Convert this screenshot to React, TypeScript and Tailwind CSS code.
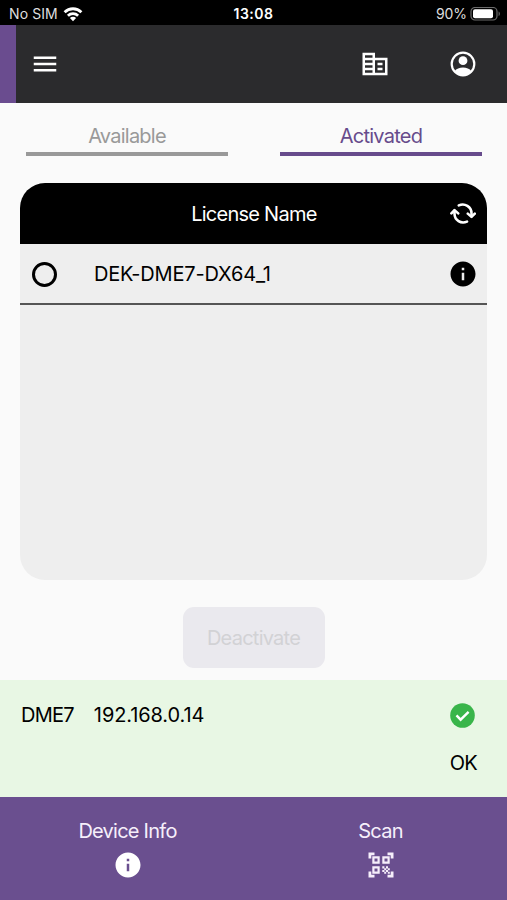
import { MdCorporateFare, MdInfo, MdMenu } from "react-icons/md"

type License = {
  id: string
  name: string
}

const licenses: License[] = [{ id: "1", name: "DEK-DME7-DX64_1" }]

function WifiIcon() {
  return (
    <svg width="20" height="15" viewBox="0 0 20 15" fill="none" stroke="#fff" strokeWidth="2.8">
      <path d="M1.6 5.2a12 12 0 0 1 16.8 0" />
      <path d="M4.9 8.7a7.3 7.3 0 0 1 10.2 0" />
      <path d="M10 14.2 6.9 11a4.4 4.4 0 0 1 6.2 0z" fill="#fff" stroke="none" />
    </svg>
  )
}

function BatteryIcon() {
  return (
    <svg width="31" height="15" viewBox="0 0 31 15" fill="none">
      <rect x="1" y="0.5" width="26" height="12.5" rx="4" stroke="#6b6b6b" strokeWidth="1.2" />
      <rect x="3" y="2.3" width="20" height="9" rx="2" fill="#fff" />
      <path d="M28.6 4.5v4.6c1.7-.7 1.7-3.9 0-4.6z" fill="#6b6b6b" />
    </svg>
  )
}

function AccountIcon() {
  return (
    <svg width="26" height="26" viewBox="0 0 26 26" fill="none">
      <circle cx="13" cy="13" r="11.3" stroke="#fff" strokeWidth="2.2" />
      <circle cx="13" cy="9.7" r="4.4" fill="#fff" />
      <path d="M4.6 20.2c1.6-2.6 5-3.8 8.4-3.8s6.8 1.2 8.4 3.8a11.2 11.2 0 0 1-16.8 0z" fill="#fff" />
    </svg>
  )
}

function RefreshIcon() {
  return (
    <svg width="26" height="21" viewBox="0 0 26 21" fill="none" stroke="#fff" strokeWidth="2.6" strokeLinecap="round" strokeLinejoin="round">
      <path d="M8.8 2.4c6-2.7 12.6 1.3 12.7 7.8v3" />
      <path d="m17.8 10.6 3.7 3.3 3.3-3.3" />
      <path d="M17 18.6c-6 2.7-12.4-1.3-12.5-7.8v-3" />
      <path d="m1.400 10.400 3.100-3.300 3.700 3.300" />
    </svg>
  )
}

function CheckIcon() {
  return (
    <svg width="25" height="25" viewBox="0 0 25 25" fill="none">
      <circle cx="12.5" cy="12.5" r="12.3" fill="#39b54a" />
      <path d="m6.5 12.4 4.1 4.300 8-7.800" stroke="#fff" strokeWidth="2.4" />
    </svg>
  )
}

function QrScanIcon() {
  return (
    <svg width="30" height="30" viewBox="0 0 30 30" fill="none" stroke="currentColor">
      <path strokeWidth="2.8" d="M3.900 8.500V3.900h4.600M21.500 3.900h4.600v4.600M26.100 21.500v4.600h-4.600M8.500 26.100H3.900v-4.600" />
      <path strokeWidth="2.200" d="M7.400 7.400h5.200v5.200H7.400zM17.400 7.400h5.200v5.200h-5.200zM7.400 17.400h5.200v5.200H7.400z" />
      <path
        fill="currentColor"
        stroke="none"
        d="M16.300 16.300h2.100v2.100h-2.100zM20 16.300h2v2.100h-2zM18.200 18.200h2v2h-2zM21.800 18.200h2v2h-2zM16.300 20h2.100v2h-2.100zM20 20h2v2h-2zM18.200 21.800h2v2h-2zM21.800 21.800h2v2h-2z"
      />
    </svg>
  )
}

function StatusBar() {
  return (
    <div className="grid h-[25px] grid-cols-3 items-center bg-black text-[14px] text-[#dedede]">
      <div className="flex items-center gap-[5px] pl-[9px] pt-[2px]">
        <span className="tracking-[0.1px]">No SIM</span>
        <WifiIcon />
      </div>
      <span className="pt-[2px] text-center font-semibold tracking-[0.5px] text-white">13:08</span>
      <div className="flex items-center justify-end gap-[3px] pr-[6px] pt-[2px]">
        <span className="tracking-[-0.1px]">90%</span>
        <BatteryIcon />
      </div>
    </div>
  )
}

export default function App() {
  return (
    <main className="flex h-[900px] w-[507px] flex-col overflow-hidden bg-[#fafafa] font-['Inter',sans-serif] text-[20px] leading-[24px] tracking-[-0.75px] text-black">
      <StatusBar />

      <header className="flex h-[78px] items-center border-l-[16px] border-[#6a4c8f] bg-[#2b2b2d] pl-[14px] pr-[31px] text-white">
        <button className="mr-auto">
          <MdMenu size={30} />
        </button>
        <button className="mr-[60px]">
          <MdCorporateFare size={30} />
        </button>
        <button>
          <AccountIcon />
        </button>
      </header>

      <nav className="flex justify-between pl-[26px] pr-[25px] pt-[21px]">
        <button className="h-[32px] w-[202px] border-b-4 border-[#999999] pb-1 text-[#999999]">Available</button>
        <button className="h-[32px] w-[202px] border-b-4 border-[#674b8c] pb-1 text-[#674b8c]">Activated</button>
      </nav>

      <section className="ml-[20.4px] mr-[19.6px] mt-[27px] h-[397px] shrink-0 overflow-hidden rounded-[25px] bg-[#eeeeee]">
        <div className="grid h-[61px] grid-cols-[50px_1fr_50px] items-center bg-black text-white">
          <span />
          <h1 className="text-center">License Name</h1>
          <button className="flex justify-center pl-px">
            <RefreshIcon />
          </button>
        </div>
        {licenses.map((l) => (
          <div key={l.id} className="flex h-[61px] items-center border-b-2 border-[#555555] pl-3 pr-[9.5px]">
            <span className="mr-[36.500px] mt-px size-[25px] rounded-full border-3 border-black" />
            <span className="pt-px tracking-[-0.15px]">{l.name}</span>
            <button className="ml-auto mt-px">
              <MdInfo size={30} />
            </button>
          </div>
        ))}
      </section>

      <button disabled className="mx-auto mt-[27px] h-[61px] w-[142px] shrink-0 rounded-[11px] bg-[#eae9ee] text-[#d2d2d5]">
        Deactivate
      </button>

      <section className="mt-3 flex h-[117px] shrink-0 justify-between bg-[#e8f7e4] px-[21px] pt-[23px]">
        <div className="flex gap-[20px]">
          <span>DME7</span>
          <span className="tracking-[-0.1px]">192.168.0.14</span>
        </div>
        <div className="flex flex-col gap-[23px] pr-[9px]">
          <CheckIcon />
          <span>OK</span>
        </div>
      </section>

      <footer className="grid flex-1 grid-cols-2 bg-[#6a4f8f] pl-px text-[#f6effb]">
        <button className="flex flex-col items-center gap-[7px] pt-[22px]">
          <span>Device Info</span>
          <MdInfo size={30} color="#fff" />
        </button>
        <button className="flex flex-col items-center gap-[7px] pt-[22px]">
          <span>Scan</span>
          <QrScanIcon />
        </button>
      </footer>
    </main>
  )
}
